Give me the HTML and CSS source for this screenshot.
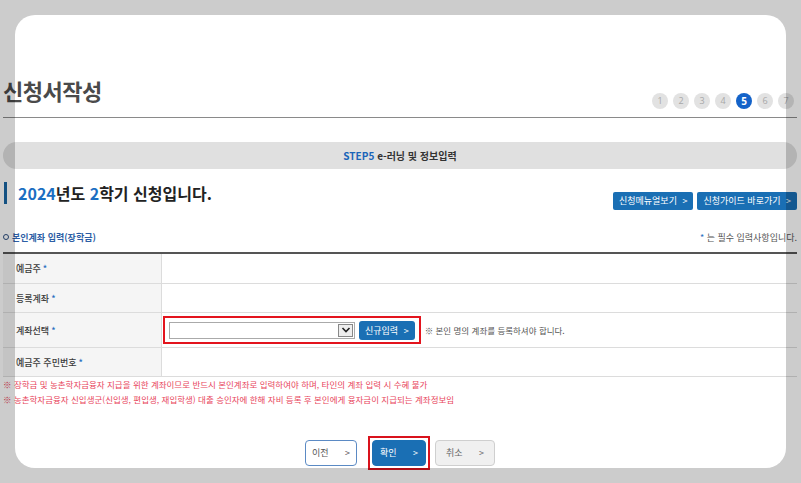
FILE: index.html
```html
<!DOCTYPE html>
<html lang="ko">
    <head>
        <title>신청서작성</title>
        <meta charset="utf-8">
        <link rel="stylesheet" href="styles.css">
    </head>
    <body>
        <div class="page">
            <div class="title-row">
                <h1 class="title">신청서작성</h1>
                <ol class="steps">
                    <li>1</li>
                    <li>2</li>
                    <li>3</li>
                    <li>4</li>
                    <li class="on">5</li>
                    <li>6</li>
                    <li>7</li>
                </ol>
            </div>

            <div class="step-bar"><span class="step-no">STEP5</span> e-러닝 및 정보입력</div>

            <div class="head-row">
                <h2 class="term"><span class="blue">2024</span>년도 <span class="blue">2</span>학기 신청입니다.</h2>
                <div class="guide-btns">
                    <a class="btn-guide">신청메뉴얼보기 <span class="gt">&gt;</span></a>
                    <a class="btn-guide">신청가이드 바로가기 <span class="gt">&gt;</span></a>
                </div>
            </div>

            <div class="sec-row">
                <h3 class="sec-title"><span class="ring"></span>본인계좌 입력(장학금)</h3>
                <p class="req"><span class="star">*</span> 는 필수 입력사항입니다.</p>
            </div>

            <table class="form-table">
                <tr class="r1">
                    <th>예금주<span class="star">*</span></th>
                    <td></td>
                </tr>
                <tr class="r2">
                    <th>등록계좌<span class="star">*</span></th>
                    <td></td>
                </tr>
                <tr class="r3">
                    <th>계좌선택<span class="star">*</span></th>
                    <td>
                        <div class="pick">
                            <span class="red-box">
                                <span class="select">
                                    <span class="arrow"><svg width="10" height="8" viewBox="0 0 10 8"><path d="M1.5 2 L5 5.5 L8.5 2" fill="none" stroke="#222" stroke-width="1.6"/></svg></span>
                                </span>
                                <a class="btn-new">신규입력 <span class="gt">&gt;</span></a>
                            </span>
                            <span class="hint">※ 본인 명의 계좌를 등록하셔야 합니다.</span>
                        </div>
                    </td>
                </tr>
                <tr class="r4">
                    <th>예금주 주민번호<span class="star">*</span></th>
                    <td></td>
                </tr>
            </table>

            <ul class="notes">
                <li>※ 장학금 및 농촌학자금융자 지급을 위한 계좌이므로 반드시 본인계좌로 입력하여야 하며, 타인의 계좌 입력 시 수혜 불가</li>
                <li>※ 농촌학자금융자 신입생군(신입생, 편입생, 재입학생) 대출 승인자에 한해 자비 등록 후 본인에게 융자금이 지급되는 계좌정보임</li>
            </ul>

            <div class="actions">
                <a class="btn btn-prev">이전 <span class="gt">&gt;</span></a>
                <span class="ok-frame"><a class="btn btn-ok">확인 <span class="gt">&gt;</span></a></span>
                <a class="btn btn-cancel">취소 <span class="gt">&gt;</span></a>
            </div>
        </div>

        <div class="frame"></div>
    </body>
</html>
```

FILE: styles.css
```css
html, body {
    margin: 0;
    background: #fff;
    overflow: hidden;
}

body {
    font-family: "Noto Sans CJK KR", "Noto Sans", sans-serif;
    color: #333;
    width: 801px;
    height: 483px;
}

.page {
    padding: 0 4px 0 3px;
}

.blue {
    color: #1b6ec2;
}

.star {
    color: #2a6fc0;
    margin-left: 2px;
}

.gt {
    margin-left: 3px;
    font-weight: normal;
}

/* title */
.title-row {
    display: flex;
    justify-content: space-between;
    align-items: flex-end;
    height: 117px;
    border-bottom: 1px solid #8a8a8a;
}

.title {
    margin: 0 0 14px 0;
    font-size: 22px;
    line-height: 26px;
    font-weight: bold;
    color: #4a4a4a;
    letter-spacing: -0.5px;
}

.steps {
    display: flex;
    gap: 5px;
    list-style: none;
    margin: 0 3px 8px 0;
    padding: 0;
}

.steps li {
    width: 16px;
    height: 16px;
    border-radius: 50%;
    background: #e2e2e2;
    color: #a8a8a8;
    font-family: "Open Sans", sans-serif;
    font-size: 9px;
    line-height: 16px;
    text-align: center;
}

.steps li.on {
    background: #1463c9;
    color: #fff;
    font-weight: bold;
    font-size: 10px;
}

/* step bar */
.step-bar {
    margin-top: 24px;
    height: 27px;
    line-height: 27px;
    border-radius: 14px;
    background: #e0e0e0;
    text-align: center;
    font-size: 10px;
    font-weight: bold;
    color: #333;
}

.step-no {
    color: #1b64b8;
}

/* heading */
.head-row {
    display: flex;
    justify-content: space-between;
    align-items: flex-end;
    margin-top: 13px;
}

.term {
    margin: 0;
    padding-left: 11px;
    border-left: 3px solid #1a66a3;
    margin-left: 1px;
    height: 22px;
    line-height: 22px;
    font-size: 16px;
    font-weight: bold;
    color: #222;
}

.guide-btns {
    display: flex;
    gap: 4px;
    margin-bottom: -6px;
}

.btn-guide {
    display: block;
    height: 18px;
    line-height: 18px;
    padding: 0 6px;
    background: #1a6fb4;
    color: #fff;
    font-size: 9px;
    border-radius: 2px;
}

/* section */
.sec-row {
    display: flex;
    justify-content: space-between;
    align-items: center;
    margin-top: 26px;
    height: 14px;
}

.sec-title {
    margin: 0;
    display: flex;
    align-items: center;
    gap: 3px;
    font-size: 9px;
    font-weight: bold;
    color: #2d5ea5;
}

.ring {
    width: 4px;
    height: 4px;
    border: 1.5px solid #2d4f80;
    border-radius: 50%;
}

.req {
    margin: 0;
    font-size: 9px;
    color: #555;
}

/* table */
.form-table {
    width: 100%;
    margin-top: 8px;
    border-collapse: collapse;
    border-top: 2px solid #555;
}

.form-table th,
.form-table td {
    border-bottom: 1px solid #dcdcdc;
    padding: 0;
    font-size: 9px;
}

.form-table th {
    width: 145px;
    padding-left: 13px;
    background: #f5f5f5;
    border-right: 1px solid #dcdcdc;
    text-align: left;
    font-weight: 500;
    color: #3a3a3a;
}

.r1 th, .r1 td { height: 29px; }
.r2 th, .r2 td { height: 28px; }
.r3 th, .r3 td { height: 34px; }
.r4 th, .r4 td { height: 28px; }

.pick {
    display: flex;
    align-items: center;
    gap: 4px;
    padding-left: 1px;
}

.red-box {
    display: flex;
    align-items: center;
    gap: 4px;
    height: 24px;
    padding: 0 4px;
    border: 2px solid #e3141d;
}

.select {
    display: flex;
    justify-content: flex-end;
    align-items: center;
    width: 184px;
    height: 15px;
    border: 1px solid #aaa;
    background: #fff;
}

.arrow {
    display: flex;
    justify-content: center;
    align-items: center;
    width: 13px;
    height: 11px;
    margin-right: 1px;
    border: 1px solid #888;
    background: #eee;
}

.btn-new {
    display: block;
    height: 19px;
    line-height: 19px;
    padding: 0 6px;
    background: #1a6fb4;
    color: #fff;
    font-size: 9px;
    border-radius: 3px;
}

.hint {
    font-size: 8.5px;
    color: #555;
}

/* notes */
.notes {
    list-style: none;
    margin: 0;
    padding: 0;
}

.notes li {
    font-size: 8.5px;
    line-height: 15px;
    color: #e8455c;
}

/* actions */
.actions {
    display: flex;
    justify-content: center;
    align-items: center;
    gap: 4px;
    margin-top: 29px;
}

.btn {
    display: block;
    box-sizing: border-box;
    height: 26px;
    line-height: 24px;
    text-align: center;
    font-size: 9px;
    border-radius: 4px;
}

.btn .gt {
    margin-left: 14px;
}

.btn-prev {
    width: 52px;
    border: 1px solid #5b8ac4;
    color: #555;
    background: #fff;
}

.ok-frame {
    display: block;
    padding: 2px;
    border: 2px solid #d9121c;
    margin: 0 1px 0 7px;
}

.btn-ok {
    width: 54px;
    border: 1px solid #1a6fb4;
    background: #1a6fb4;
    color: #fff;
}

.btn-cancel {
    width: 60px;
    border: 1px solid #cfcfcf;
    background: #f0f0f0;
    color: #666;
}

/* grey frame lying over the page */
.frame {
    position: fixed;
    top: 15px;
    left: 15px;
    width: 771px;
    height: 453px;
    border-radius: 20px;
    box-shadow: 0 0 0 400px rgba(0, 0, 0, 0.2);
    pointer-events: none;
}
```
